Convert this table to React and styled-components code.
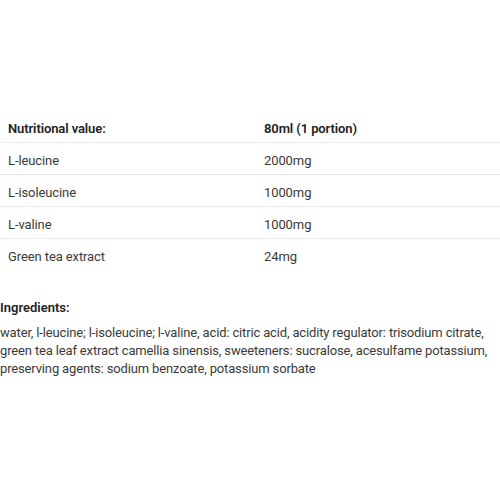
import React from "react";
import styled, { createGlobalStyle } from "styled-components";

const Global = createGlobalStyle`
  html, body { margin: 0; padding: 0; background: #fff; }
  body { font-family: Roboto, "Noto Sans", sans-serif; color: #333; }
`;

const Page = styled.div`
  padding-top: 111px;
  width: 500px;
`;

const Table = styled.table`
  width: 100%;
  border-collapse: collapse;
  table-layout: fixed;
  font-size: 13px;
  letter-spacing: -0.1px;
`;

const Row = styled.tr`
  border-bottom: 1px solid ${(p) => (p.$strong ? "#e3e3e8" : "#ededed")};
  &:last-child { border-bottom: none; }
`;

const Cell = styled.td`
  height: 28px;
  padding: 3px 8px 0;
  vertical-align: middle;
  font-weight: ${(p) => (p.$head ? 600 : 400)};
  color: ${(p) => (p.$head ? "#222" : "#3a3a3a")};
  &:nth-child(2) { padding-left: 14px; }
`;

const Section = styled.section`
  margin-top: 29px;
`;

const Heading = styled.h3`
  margin: 0 0 7px;
  font-size: 13px;
  font-weight: 600;
  color: #222;
  line-height: 18px;
`;

const Text = styled.p`
  margin: 0;
  font-size: 13px;
  line-height: 18px;
  letter-spacing: -0.15px;
  color: #3a3a3a;
  white-space: nowrap;
`;

const rows = [
  ["L-leucine", "2000mg", true],
  ["L-isoleucine", "1000mg"],
  ["L-valine", "1000mg"],
  ["Green tea extract", "24mg"],
];

export default function App() {
  return (
    <Page>
      <Global />
      <Table>
        <tbody>
          <Row>
            <Cell $head>Nutritional value:</Cell>
            <Cell $head>80ml (1 portion)</Cell>
          </Row>
          {rows.map(([a, b, s]) => (
            <Row key={a} $strong={s}>
              <Cell>{a}</Cell>
              <Cell>{b}</Cell>
            </Row>
          ))}
        </tbody>
      </Table>
      <Section>
        <Heading>Ingredients:</Heading>
        <Text>
          water, l-leucine; l-isoleucine; l-valine, acid: citric acid, acidity regulator: trisodium citrate,
          <br />
          green tea leaf extract camellia sinensis, sweeteners: sucralose, acesulfame potassium,
          <br />
          preserving agents: sodium benzoate, potassium sorbate
        </Text>
      </Section>
    </Page>
  );
}
